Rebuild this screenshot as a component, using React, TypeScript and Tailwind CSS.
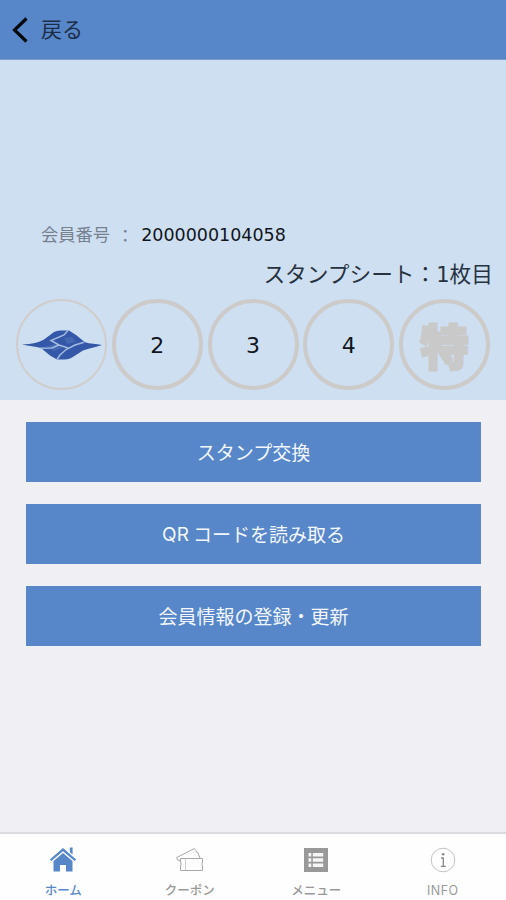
import type { ReactNode } from "react";

const STAMPS = ["logo", "2", "3", "4", "特"];

function StampLogo() {
  return (
    <svg width="80" height="30" viewBox="0 0 80 30">
      <path
        d="M0 14.6 C10 14 17 12.5 22 9.5 L32 2 Q35 0.5 38 0.5 H47 L54 5 L63 12.3 C68 13.8 74 14 80 15 C72 17.5 66 18.5 61 20.5 L50 27.5 Q47 29.5 43 29.5 H35 L28 25.5 L19 18 C13 16.5 7 16 0 14.6 Z"
        fill="#3557a8"
      />
      <path d="M24 16 L34 14 L41 18 L32 21 Z M42 8 L50 7 L54 12 L45 14 Z" fill="#4468b2" />
      <path
        d="M46 0.5 L42 5 L29 10.5 L37 15 L30 18 L18 18.3 M35 29.5 L38 25 L44 19.5 L53 15 L62 12.3 M37 15 L46 18"
        fill="none"
        stroke="#a3bce2"
        strokeWidth="1.5"
      />
    </svg>
  );
}

function Stamp({ value }: { value: string }) {
  if (value === "logo") {
    return (
      <div className="w-[91px] h-[91px] rounded-full border-[2.5px] border-[#cfcecd] flex items-center justify-center shrink-0">
        <StampLogo />
      </div>
    );
  }
  return (
    <div className="w-[91px] h-[91px] rounded-full border-[4.5px] border-[#cccbca] flex items-center justify-center shrink-0">
      {value === "特" ? (
        <span className="text-[48px] leading-none font-black text-[#c9c9c9] [-webkit-text-stroke:2.5px_#c9c9c9] relative -top-px">
          {value}
        </span>
      ) : (
        <span className="font-['DejaVu_Sans',sans-serif] text-[22px] leading-none text-[#10151b] pt-[3px]">
          {value}
        </span>
      )}
    </div>
  );
}

function ActionButton({ children }: { children: ReactNode }) {
  return (
    <button className="w-full h-[60px] pb-[2px] bg-[#5787c8] flex items-center justify-center text-[19px] leading-none text-[#f3f7fd] whitespace-pre">
      {children}
    </button>
  );
}

function HomeIcon() {
  return (
    <svg width="28" height="26" viewBox="0 0 28 26" fill="#5787c8">
      <path d="M0.8 12.4 L14 1 L27.2 12.4 L25.6 14 L14 4.2 L2.4 14 Z" />
      <path d="M20.8 0.5 H23.6 V7.6 L20.8 5.2 Z" />
      <path d="M4.5 14 L14 6 L23.5 14 V24.5 H17 V18 H11 V24.5 H4.5 Z" />
    </svg>
  );
}

function CouponIcon() {
  return (
    <svg width="28" height="26" viewBox="0 0 28 26" fill="none" stroke="#a8a8a8" strokeWidth="1">
      <path d="M4.5 11.5 H26.5 V15 Q25 17 26.5 19 V23.5 H4.5 V19 Q6 17 4.5 15 Z" />
      <path d="M9.5 12 V23" stroke="#cfcfcf" />
      <path d="M4 14.5 Q3.5 12.5 1.5 13 L0.7 10.5 L18.5 1.5 L20 3.5 Q19.8 5.5 22 6 L24 11" />
    </svg>
  );
}

function MenuIcon() {
  return (
    <svg width="28" height="26" viewBox="0 0 28 26">
      <path d="M2 1 H26 V25 H2 Z" fill="#999" />
      <path
        d="M6.5 6 H9.3 V9.6 H6.5 Z M10.8 6 H21.2 V9.6 H10.8 Z M6.5 11.2 H9.3 V14.8 H6.5 Z M10.8 11.2 H21.2 V14.8 H10.8 Z M6.5 16.4 H9.3 V20 H6.5 Z M10.8 16.4 H21.2 V20 H10.8 Z"
        fill="#f6f6f6"
      />
    </svg>
  );
}

function InfoIcon() {
  return (
    <svg width="28" height="26" viewBox="0 0 28 26" fill="none">
      <circle cx="14" cy="13" r="11.8" stroke="#bbb" strokeWidth="0.9" />
      <circle cx="14.2" cy="7.2" r="1.3" fill="#888" />
      <path d="M12 11 H14.3 V19 M11.8 19.3 H16.8" stroke="#888" strokeWidth="1.3" />
    </svg>
  );
}

function Tab({
  icon,
  label,
  active = false,
}: {
  icon: ReactNode;
  label: ReactNode;
  active?: boolean;
}) {
  return (
    <div
      className={`flex-1 flex flex-col items-center pt-[13px] ${
        active ? "text-[#5787c8]" : "text-[#999999]"
      }`}
    >
      {icon}
      <span className="mt-[10px] text-[12.5px] leading-[14px] font-medium">{label}</span>
    </div>
  );
}

export default function App() {
  return (
    <div className="w-full h-[900px] flex flex-col overflow-hidden bg-[#efeff4] font-['Noto_Sans_CJK_JP',sans-serif]">
      <header className="h-[60px] shrink-0 bg-[#5787c8] border-b border-[#7a9bcb] flex items-center pl-[12px]">
        <svg width="17" height="26" viewBox="0 0 17 26" fill="none">
          <path d="M14.5 1.5 L2.5 13 L14.5 24.5" stroke="#05080c" strokeWidth="3.2" />
        </svg>
        <span className="ml-3 pb-[2px] text-[21px] leading-none text-[#1b2d48]">戻る</span>
      </header>

      {/* Stamp card */}
      <section className="h-[340px] shrink-0 bg-[#cfdff2] flex flex-col pt-[163px]">
        <div className="h-[22px] pl-[41px] flex items-center leading-none">
          <span className="text-[17.3px] text-[#75818f]">会員番号</span>
          <span className="w-[30px] text-center text-[17px] text-[#75818f]">：</span>
          <span className="pt-[3px] pl-px font-['DejaVu_Sans',sans-serif] text-[17.5px] text-[#10151b]">
            2000000104058
          </span>
        </div>
        <div className="mt-[17px] h-[22px] pr-[13px] text-right text-[21.7px] leading-[22px] text-[#27323f]">
          スタンプシート：
          <span className="font-['DejaVu_Sans',sans-serif] font-normal text-[21px]">1</span>
          枚目
        </div>
        <div className="mt-[15px] px-4 flex justify-between">
          {STAMPS.map((value) => (
            <Stamp key={value} value={value} />
          ))}
        </div>
      </section>

      <main className="flex-1 pt-[22px] pl-[26px] pr-[25px] flex flex-col gap-[22px]">
        <ActionButton>スタンプ交換</ActionButton>
        <ActionButton>
          <span className="font-['Inter',sans-serif] pt-[2px] mr-1">QR</span>コードを読み取る
        </ActionButton>
        <ActionButton>会員情報の登録・更新</ActionButton>
      </main>

      <nav className="h-[68px] shrink-0 bg-[#fefefe] border-t-2 border-[#dcdce0] flex">
        <Tab icon={<HomeIcon />} label="ホーム" active />
        <Tab icon={<CouponIcon />} label="クーポン" />
        <Tab icon={<MenuIcon />} label="メニュー" />
        <Tab
          icon={<InfoIcon />}
          label={
            <span className="font-['Inter',sans-serif] font-normal text-[12.5px] tracking-[0.4px]">
              INFO
            </span>
          }
        />
      </nav>
    </div>
  );
}
